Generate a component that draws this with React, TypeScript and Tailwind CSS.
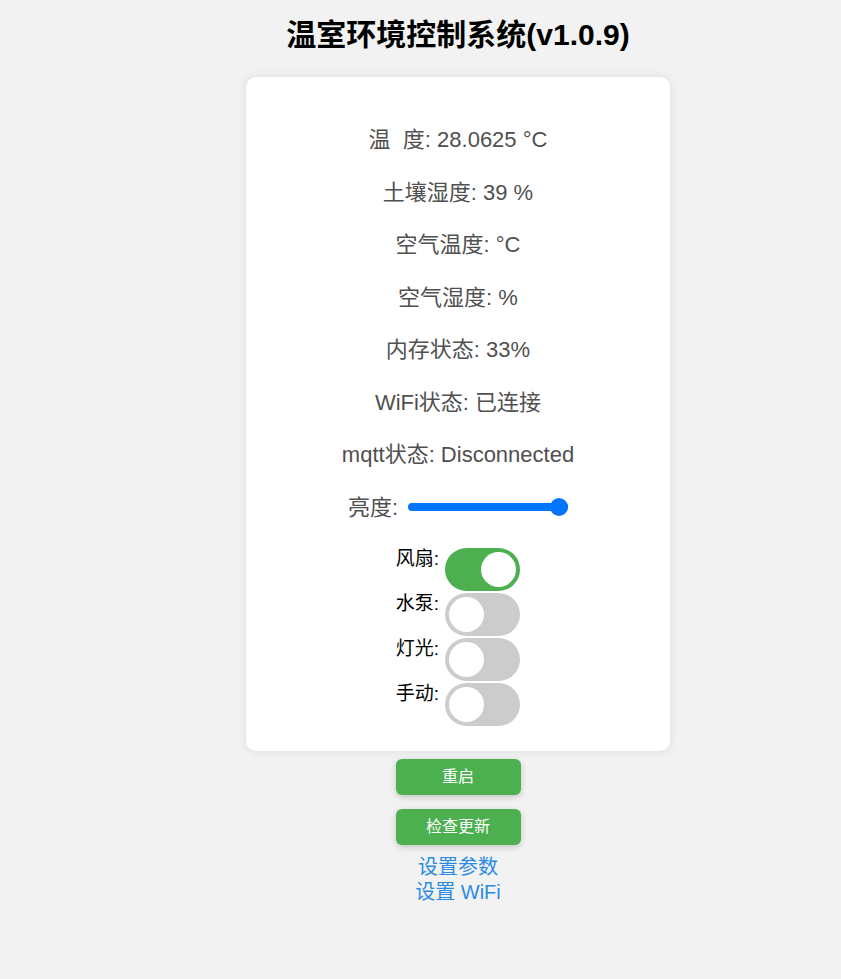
import { useState } from "react";

const font = { fontFamily: '"Liberation Sans", Arial, "Noto Sans CJK SC", sans-serif' };

function Switch({ on, onToggle }: { on: boolean; onToggle: () => void }) {
  return (
    <button
      type="button"
      onClick={onToggle}
      className={`relative w-[75px] h-[43px] rounded-full transition-colors ${on ? "bg-[#4caf50]" : "bg-[#cccccc]"}`}
    >
      <span
        className={`absolute top-[4px] w-[35px] h-[35px] rounded-full bg-white transition-all ${on ? "left-[36px]" : "left-[4px]"}`}
      />
    </button>
  );
}

export default function App() {
  const [switches, setSwitches] = useState({ fan: true, pump: false, light: false, manual: false });

  const rows: { key: keyof typeof switches; label: string }[] = [
    { key: "fan", label: "风扇:" },
    { key: "pump", label: "水泵:" },
    { key: "light", label: "灯光:" },
    { key: "manual", label: "手动:" },
  ];

  const readings = [
    "温\u00a0\u00a0度: 28.0625 °C",
    "土壤湿度: 39 %",
    "空气温度: °C",
    "空气湿度: %",
    "内存状态: 33%",
    "WiFi状态: 已连接",
    "mqtt状态: Disconnected",
  ];

  return (
    <div className="min-h-screen bg-[#f2f2f2] pl-[75px]" style={font}>
      <div className="flex flex-col items-center">
        <h1 className="mt-[17px] text-[30px] leading-[36px] font-bold text-black">
          温室环境控制系统(v1.0.9)
        </h1>

        <div className="mt-[24px] w-[424px] bg-white rounded-[10px] shadow-[0_0_10px_rgba(0,0,0,0.1)] pt-[46px] pb-[25px] flex flex-col items-center">
          <div className="flex flex-col items-center gap-[19.5px] text-[22px] leading-[33px] text-[#505050]">
            {readings.map(text => (
              <p key={text}>{text}</p>
            ))}

            <div className="flex items-center gap-[10px]">
              <span>亮度:</span>
              <div className="relative w-[160px] h-[18px] flex items-center">
                <div className="w-full h-[8px] rounded-full bg-[#0075ff]" />
                <div className="absolute right-0 w-[18px] h-[18px] rounded-full bg-[#0075ff]" />
              </div>
            </div>
          </div>

          <div className="mt-[24px] flex flex-col gap-[2px]">
            {rows.map(row => (
              <div key={row.key} className="flex items-start gap-[6px]">
                <span className="text-[19px] leading-[21px] text-black">{row.label}</span>
                <Switch
                  on={switches[row.key]}
                  onToggle={() => setSwitches(s => ({ ...s, [row.key]: !s[row.key] }))}
                />
              </div>
            ))}
          </div>
        </div>

        <button className="mt-[8px] w-[125px] h-[36px] rounded-[6px] bg-[#4caf50] text-white text-[16px] shadow-[0_2px_6px_rgba(0,0,0,0.2)]">
          重启
        </button>
        <button className="mt-[14px] w-[125px] h-[36px] rounded-[6px] bg-[#4caf50] text-white text-[16px] shadow-[0_2px_6px_rgba(0,0,0,0.2)]">
          检查更新
        </button>

        <a href="#" className="mt-[10px] text-[20px] leading-[25px] text-[#2a8be6]">设置参数</a>
        <a href="#" className="text-[20px] leading-[25px] text-[#2a8be6]">设置 WiFi</a>
      </div>
    </div>
  );
}
